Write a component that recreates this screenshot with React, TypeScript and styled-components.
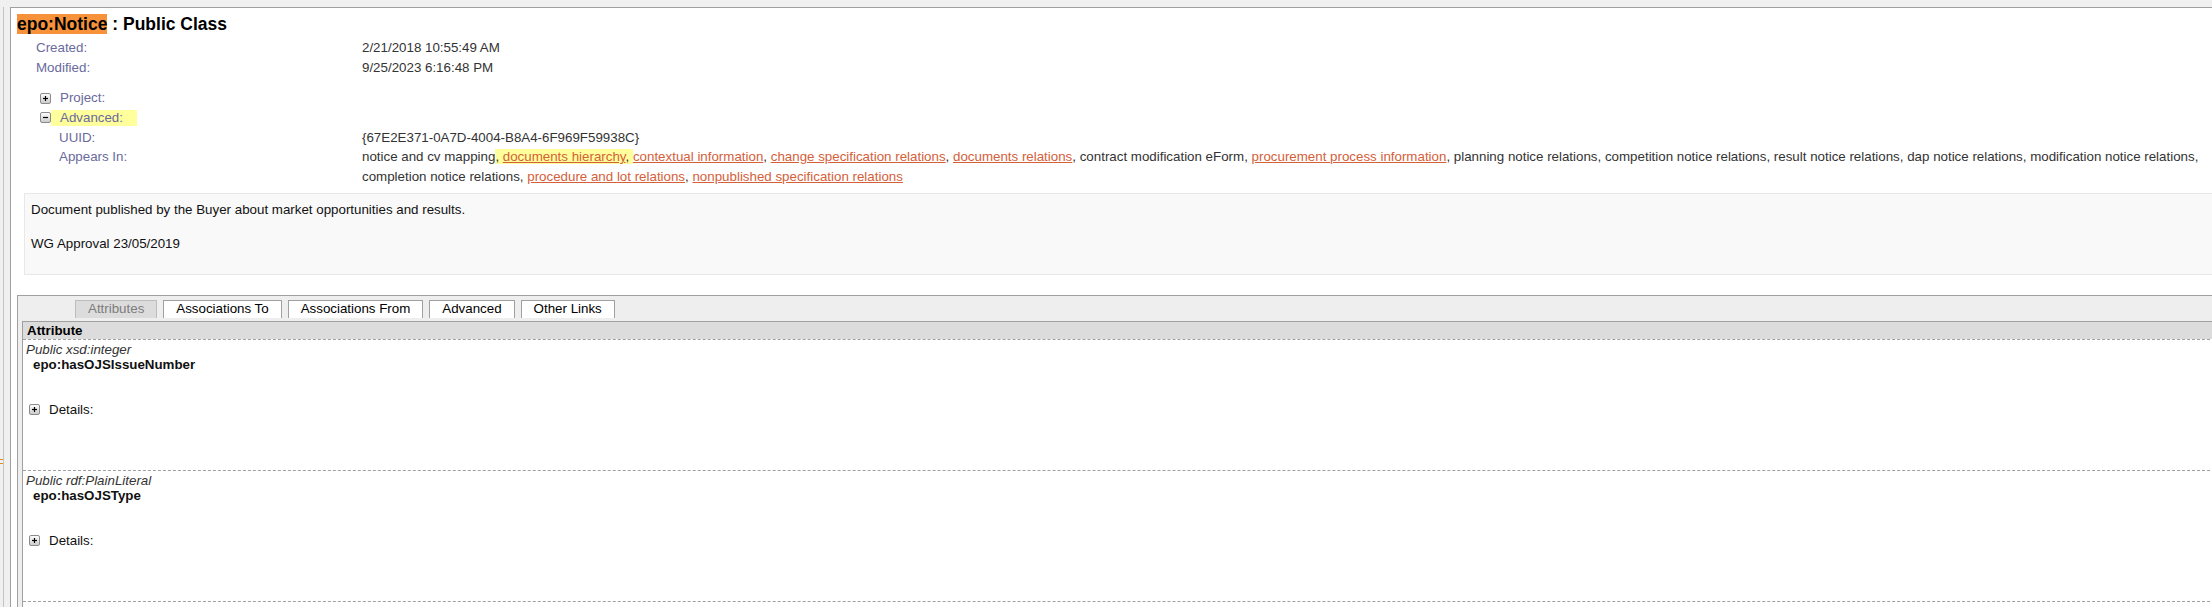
import React from "react";
import styled, { createGlobalStyle } from "styled-components";

const Global = createGlobalStyle`
  html, body {
    margin: 0;
    padding: 0;
    background: #f0f0f0;
    overflow: hidden;
    font-family: "Liberation Sans", Arial, sans-serif;
    font-size: 13.33px;
    color: #333;
  }
`;

const Frame = styled.div`
  display: flex;
  width: 2260px;
  padding-top: 7px;
  height: 600px;
`;

const Gutter = styled.div`
  position: relative;
  width: 10px;
  flex: none;
  background: linear-gradient(to right, transparent 3px, #c4c4c4 3px, #c4c4c4 4px, transparent 4px);
`;

const Grip = styled.div`
  position: absolute;
  left: 0;
  top: 452px;
  width: 3px;
  height: 3px;
  border-top: 1px solid #e08a20;
  border-bottom: 1px solid #e08a20;
`;

const Panel = styled.div`
  flex: 1;
  background: #fff;
  border-top: 1px solid #a0a0a0;
  border-left: 1px solid #a0a0a0;
  padding: 6px 0 0 6px;
`;

const Title = styled.h1`
  margin: 0;
  font-size: 17.5px;
  font-weight: bold;
  line-height: 20px;
  color: #000;
`;

const Highlight = styled.span<{ $tone: "orange" | "yellow" }>`
  background: ${(p) => (p.$tone === "orange" ? "#f7923a" : "#ffff9c")};
`;

const Props = styled.div`
  display: grid;
  grid-template-columns: 326px 1fr;
  align-items: start;
  margin: 4px 0 0 19px;
  line-height: 19.5px;
  padding-right: 4px;
`;

const Label = styled.div<{ $indent?: boolean }>`
  color: #6a6a9c;
  padding-left: ${(p) => (p.$indent ? "23px" : "0")};
`;

const Value = styled.div`
  color: #333;
  min-height: 19.5px;
`;

const Spacer = styled.div`
  grid-column: 1 / span 2;
  height: 11.5px;
`;

const ToggleLabel = styled.div`
  display: flex;
  align-items: center;
  height: 19.5px;
  padding-left: 4px;
  color: #6a6a9c;
`;

const ToggleText = styled.span<{ $marked?: boolean }>`
  display: inline-block;
  line-height: 16px;
  padding: 0 14px 0 9px;
  background: ${(p) => (p.$marked ? "#ffff9c" : "transparent")};
`;

const Link = styled.a`
  color: #d4603a;
  text-decoration: underline;
  cursor: pointer;
`;

const Notes = styled.div`
  margin: 7px 0 0 7px;
  background: #f9f9f9;
  border: 1px solid #e8e8e8;
  padding: 8px 6px 22px;
  color: #111;
  line-height: 16px;
`;

const Para = styled.p`
  margin: 0 0 18px;
  &:last-child {
    margin-bottom: 0;
  }
`;

const TabBox = styled.div`
  margin: 20px 0 0 0;
  border-top: 1px solid #a0a0a0;
  border-left: 1px solid #a0a0a0;
  background: #eeeeee;
  padding: 4px 0 0 4px;
  height: 400px;
`;

const TabBar = styled.div`
  display: flex;
  gap: 6px;
  padding-left: 53px;
  height: 18px;
`;

const Tab = styled.div<{ $active?: boolean }>`
  box-sizing: border-box;
  height: 18px;
  line-height: 16px;
  padding: 0 12px;
  border: 1px solid ${(p) => (p.$active ? "#bcbcbc" : "#a0a0a0")};
  border-bottom: none;
  background: ${(p) => (p.$active ? "#dcdcdc" : "#ffffff")};
  color: ${(p) => (p.$active ? "#7d7d7d" : "#000")};
`;

const Table = styled.div`
  margin-top: 3px;
  background: #fff;
  border-left: 1px solid #a0a0a0;
  height: 400px;
`;

const HeaderCell = styled.div`
  border-top: 1px solid #a0a0a0;
  background: #dcdcdc;
  font-weight: bold;
  color: #000;
  line-height: 17px;
  padding-left: 4px;
`;

const Row = styled.div`
  box-sizing: border-box;
  border-top: 1px dashed #a0a0a0;
  height: 131px;
  padding: 2px 0 0 3px;
`;

const TypeLine = styled.div`
  font-style: italic;
  color: #333;
  line-height: 15px;
`;

const NameLine = styled.div`
  font-weight: bold;
  color: #111;
  line-height: 15px;
  padding-left: 7px;
`;

const Details = styled.div`
  display: flex;
  align-items: center;
  margin-top: 30px;
  padding-left: 3px;
  line-height: 15px;
  color: #111;
  gap: 9px;
`;

const Box = ({ minus }: { minus?: boolean }) => (
  <svg width="11" height="11" viewBox="0 0 11 11" style={{ flex: "none" }}>
    <defs>
      <linearGradient id={minus ? "gm" : "gp"} x1="0" y1="0" x2="0" y2="1">
        <stop offset="0" stopColor="#ffffff" />
        <stop offset="1" stopColor="#c9c9c9" />
      </linearGradient>
    </defs>
    <rect x="0.5" y="0.5" width="10" height="10" rx="1.5" fill={`url(#${minus ? "gm" : "gp"})`} stroke="#8c8c8c" />
    <path d="M3 5.5h5" stroke="#000" strokeWidth="1.2" />
    {!minus && <path d="M5.5 3v5" stroke="#000" strokeWidth="1.2" />}
  </svg>
);

const rows = [
  { type: "Public xsd:integer", name: "epo:hasOJSIssueNumber" },
  { type: "Public rdf:PlainLiteral", name: "epo:hasOJSType" },
  { type: "Public rdf:PlainLiteral", name: "epo:hasOJSTitle" },
];

export default function App() {
  return (
    <>
      <Global />
      <Frame>
        <Gutter>
          <Grip />
        </Gutter>
        <Panel>
          <Title>
            <Highlight $tone="orange">epo:Notice</Highlight> : Public Class
          </Title>
          <Props>
            <Label>Created:</Label>
            <Value>2/21/2018 10:55:49 AM</Value>
            <Label>Modified:</Label>
            <Value>9/25/2023 6:16:48 PM</Value>
            <Spacer />
            <ToggleLabel>
              <Box />
              <ToggleText>Project:</ToggleText>
            </ToggleLabel>
            <Value />
            <ToggleLabel>
              <Box minus />
              <ToggleText $marked>Advanced:</ToggleText>
            </ToggleLabel>
            <Value />
            <Label $indent>UUID:</Label>
            <Value>{"{67E2E371-0A7D-4004-B8A4-6F969F59938C}"}</Value>
            <Label $indent>Appears In:</Label>
            <Value>
              notice and cv mapping
              <Highlight $tone="yellow">
                , <Link>documents hierarchy</Link>,{" "}
              </Highlight>
              <Link>contextual information</Link>, <Link>change specification relations</Link>,{" "}
              <Link>documents relations</Link>, contract modification eForm,{" "}
              <Link>procurement process information</Link>, planning notice relations, competition notice
              relations, result notice relations, dap notice relations, modification notice relations,
              completion notice relations, <Link>procedure and lot relations</Link>,{" "}
              <Link>nonpublished specification relations</Link>
            </Value>
          </Props>
          <Notes>
            <Para>Document published by the Buyer about market opportunities and results.</Para>
            <Para>WG Approval 23/05/2019</Para>
          </Notes>
          <TabBox>
            <TabBar>
              <Tab $active>Attributes</Tab>
              <Tab>Associations To</Tab>
              <Tab>Associations From</Tab>
              <Tab>Advanced</Tab>
              <Tab>Other Links</Tab>
            </TabBar>
            <Table>
              <HeaderCell>Attribute</HeaderCell>
              {rows.map((r) => (
                <Row key={r.name}>
                  <TypeLine>{r.type}</TypeLine>
                  <NameLine>{r.name}</NameLine>
                  <Details>
                    <Box />
                    <span>Details:</span>
                  </Details>
                </Row>
              ))}
            </Table>
          </TabBox>
        </Panel>
      </Frame>
    </>
  );
}
